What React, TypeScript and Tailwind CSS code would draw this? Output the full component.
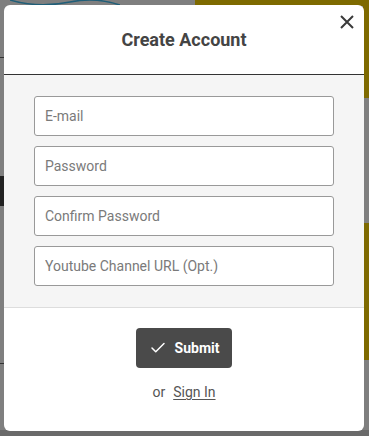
import { Check } from 'lucide-react';

const fields = ['E-mail', 'Password', 'Confirm Password', 'Youtube Channel URL (Opt.)'];

function Backdrop() {
  return (
    <div className="absolute inset-0 bg-[#7f7f7f]">
      {/* page behind the overlay */}
      <div className="absolute left-[195px] right-0 top-0 h-[6px] bg-[#7e6a00]" />
      <div className="absolute right-0 top-0 w-[6px] h-[98px] bg-[#7e6a00]" />
      <div className="absolute right-0 top-[223px] w-[6px] h-[137px] bg-[#7e6a00]" />
      <svg className="absolute left-[10px] top-0" width="110" height="6" viewBox="0 0 110 6">
        <path d="M0 0 C 20 6, 40 6, 60 2 S 95 0, 110 5" stroke="#1f5e78" strokeWidth="1.5" fill="none" />
      </svg>
      <div className="absolute left-0 top-[57px] w-[6px] h-px bg-[#333]" />
      <div className="absolute left-0 top-[176px] w-[6px] h-[30px] bg-[#222]" />
      <div className="absolute left-0 top-[363px] w-[6px] h-px bg-[#333]" />
      <div className="absolute left-0 right-0 bottom-0 h-[6px] bg-[#6a6a6a]" />
    </div>
  );
}

export default function App() {
  return (
    <div className="relative w-[369px] h-[436px] overflow-hidden font-['Roboto',sans-serif]">
      <Backdrop />

      <div className="absolute left-[4px] top-[5px] w-[360px] h-[426px] bg-white rounded-[6px] flex flex-col overflow-hidden">
        <div className="relative h-[70px] shrink-0 flex items-center justify-center border-b border-[#333]">
          <h2 className="text-[18px] font-bold text-[#444] leading-none">Create Account</h2>
          <button className="absolute right-[10px] top-[10px] w-[14px] h-[14px]">
            <svg width="14" height="14" viewBox="0 0 14 14">
              <path d="M1 1 L13 13 M13 1 L1 13" stroke="#3a3a3a" strokeWidth="2" />
            </svg>
          </button>
        </div>

        <div className="bg-[#f5f5f5] px-[30px] py-[21px] flex flex-col gap-[10px] border-b border-[#ddd]">
          {fields.map((f) => (
            <input
              key={f}
              placeholder={f}
              className="h-[40px] w-full bg-white border border-[#999] rounded-[3px] pl-[10px] text-[14px] text-[#333] placeholder:text-[#7a7a7a] outline-none"
            />
          ))}
        </div>

        <div className="flex flex-col items-center pt-[20px]">
          <button className="w-[96px] h-[40px] bg-[#4a4a4a] rounded-[4px] flex items-center justify-center gap-[8px] text-white text-[14px] font-bold">
            <Check className="w-[18px] h-[18px]" strokeWidth={2} />
            Submit
          </button>
          <p className="mt-[14px] text-[14px] text-[#555] flex gap-[8px]">
            <span>or</span>
            <a className="underline underline-offset-2 cursor-pointer">Sign In</a>
          </p>
        </div>
      </div>
    </div>
  );
}
